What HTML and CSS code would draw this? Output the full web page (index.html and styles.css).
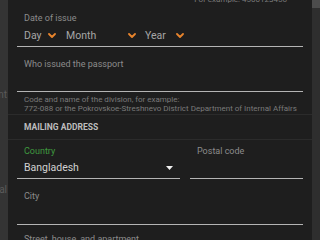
FILE: index.html
```html
<!DOCTYPE html>
<html lang="en">
<head>
  <meta charset="UTF-8" />
  <meta name="viewport" content="width=device-width, initial-scale=1.0" />
  <title>Passport details</title>
  <link rel="stylesheet" href="styles.css">
</head>
<body>
  <!-- Page behind the dialog -->
  <div class="backdrop">
    <span class="backdrop-text first">nt</span>
    <span class="backdrop-text second">al</span>
  </div>

  <div class="dialog">
    <div class="form">
      <p class="prev-hint">For example: 4500123456</p>

      <!-- Date of issue -->
      <div class="field date-field">
        <label>Date of issue</label>
        <div class="date-row">
          <div class="sel sel-day">
            <span>Day</span>
            <svg class="chev" width="8" height="5" viewBox="0 0 8 5"><polyline points="1,1 4,4 7,1" /></svg>
          </div>
          <div class="sel sel-month">
            <span>Month</span>
            <svg class="chev" width="8" height="5" viewBox="0 0 8 5"><polyline points="1,1 4,4 7,1" /></svg>
          </div>
          <div class="sel sel-year">
            <span>Year</span>
            <svg class="chev" width="8" height="5" viewBox="0 0 8 5"><polyline points="1,1 4,4 7,1" /></svg>
          </div>
        </div>
      </div>

      <!-- Issued by -->
      <div class="field issuer-field">
        <label>Who issued the passport</label>
        <div class="value"></div>
      </div>
      <p class="hint">Code and name of the division, for example:<br>772-088 or the Pokrovskoe-Streshnevo District Department of Internal Affairs</p>
    </div>

    <div class="section-title">MAILING ADDRESS</div>

    <div class="form">
      <div class="field-row">
        <div class="field country-field">
          <label class="focused">Country</label>
          <div class="value">
            <span>Bangladesh</span>
            <svg class="caret" width="7" height="4" viewBox="0 0 7 4"><polygon points="0,0 7,0 3.5,4" /></svg>
          </div>
        </div>
        <div class="field postal-field">
          <label>Postal code</label>
          <div class="value"></div>
        </div>
      </div>

      <div class="field city-field">
        <label>City</label>
        <div class="value"></div>
      </div>

      <div class="field street-field">
        <label>Street, house, and apartment</label>
      </div>
    </div>
  </div>

  <div class="scrollbar"><div class="thumb"></div></div>
</body>
</html>
```

FILE: styles.css
```css
/* Global */
* { box-sizing: border-box; margin: 0; padding: 0; }
html, body { height: 100%; overflow: hidden; }
body {
  display: flex;
  background: #1e1e1e;
  font-family: Roboto, "Liberation Sans", sans-serif;
  color: #aaa;
}

/* Page behind the dialog */
.backdrop {
  position: relative;
  width: 8px;
  background: #343434;
  overflow: hidden;
}
.backdrop-text {
  position: absolute;
  right: 1px;
  font-size: 10px;
  color: #5a5a5a;
}
.backdrop-text.first { top: 89px; }
.backdrop-text.second { top: 184px; }

/* Dialog */
.dialog {
  flex: 1;
  background: #1e1e1e;
  overflow: hidden;
}
.form {
  padding: 0 9px;
}
.prev-hint {
  margin-top: -5px;
  height: 9px;
  padding-right: 16px;
  font-size: 8px;
  line-height: 9px;
  text-align: right;
  color: #7a7a7a;
}

/* Fields */
.field {
  padding: 0 7px;
  border-bottom: 1px solid #b4b4b4;
}
.field label {
  display: block;
  font-size: 9px;
  line-height: 12px;
  color: #8c8c8c;
}
.field label.focused { color: #3f9a3f; }

.date-field { padding-top: 8px; }
.date-row {
  display: flex;
  align-items: center;
  height: 22px;
  font-size: 10.5px;
  color: #a6a6a6;
}
.sel {
  display: flex;
  align-items: center;
  justify-content: space-between;
}
.sel-day { width: 32px; margin-right: 10px; }
.sel-month { width: 70px; margin-right: 9px; }
.sel-year { width: 39px; }
.chev {
  fill: none;
  stroke: #e8842c;
  stroke-width: 1.8;
  stroke-linecap: round;
  stroke-linejoin: round;
}

.issuer-field { padding-top: 11px; }
.issuer-field .value { height: 21px; }

.hint {
  padding: 3px 7px 0;
  height: 22px;
  font-size: 8px;
  line-height: 9px;
  color: #7a7a7a;
  white-space: nowrap;
}

/* Section header */
.section-title {
  height: 26px;
  padding-left: 16px;
  border-top: 1px solid #2b2b2b;
  border-bottom: 1px solid #2b2b2b;
  font-size: 8.5px;
  font-weight: bold;
  line-height: 24px;
  color: #bdbdbd;
}

/* Address */
.field-row {
  display: flex;
  gap: 10px;
}
.country-field { width: 163px; padding-top: 5px; }
.postal-field { flex: 1; padding-top: 5px; }
.country-field .value,
.postal-field .value {
  display: flex;
  align-items: center;
  justify-content: space-between;
  height: 21px;
  font-size: 10.5px;
  color: #d2d2d2;
}
.caret { fill: #f0f0f0; }

.city-field { padding-top: 11px; }
.city-field .value { height: 22px; }

.street-field {
  padding-top: 8px;
  border-bottom: none;
}

/* Scrollbar */
.scrollbar {
  width: 8px;
  background: #2e2e2e;
}
.scrollbar .thumb {
  height: 8px;
  background: #4c4c4c;
}
```
